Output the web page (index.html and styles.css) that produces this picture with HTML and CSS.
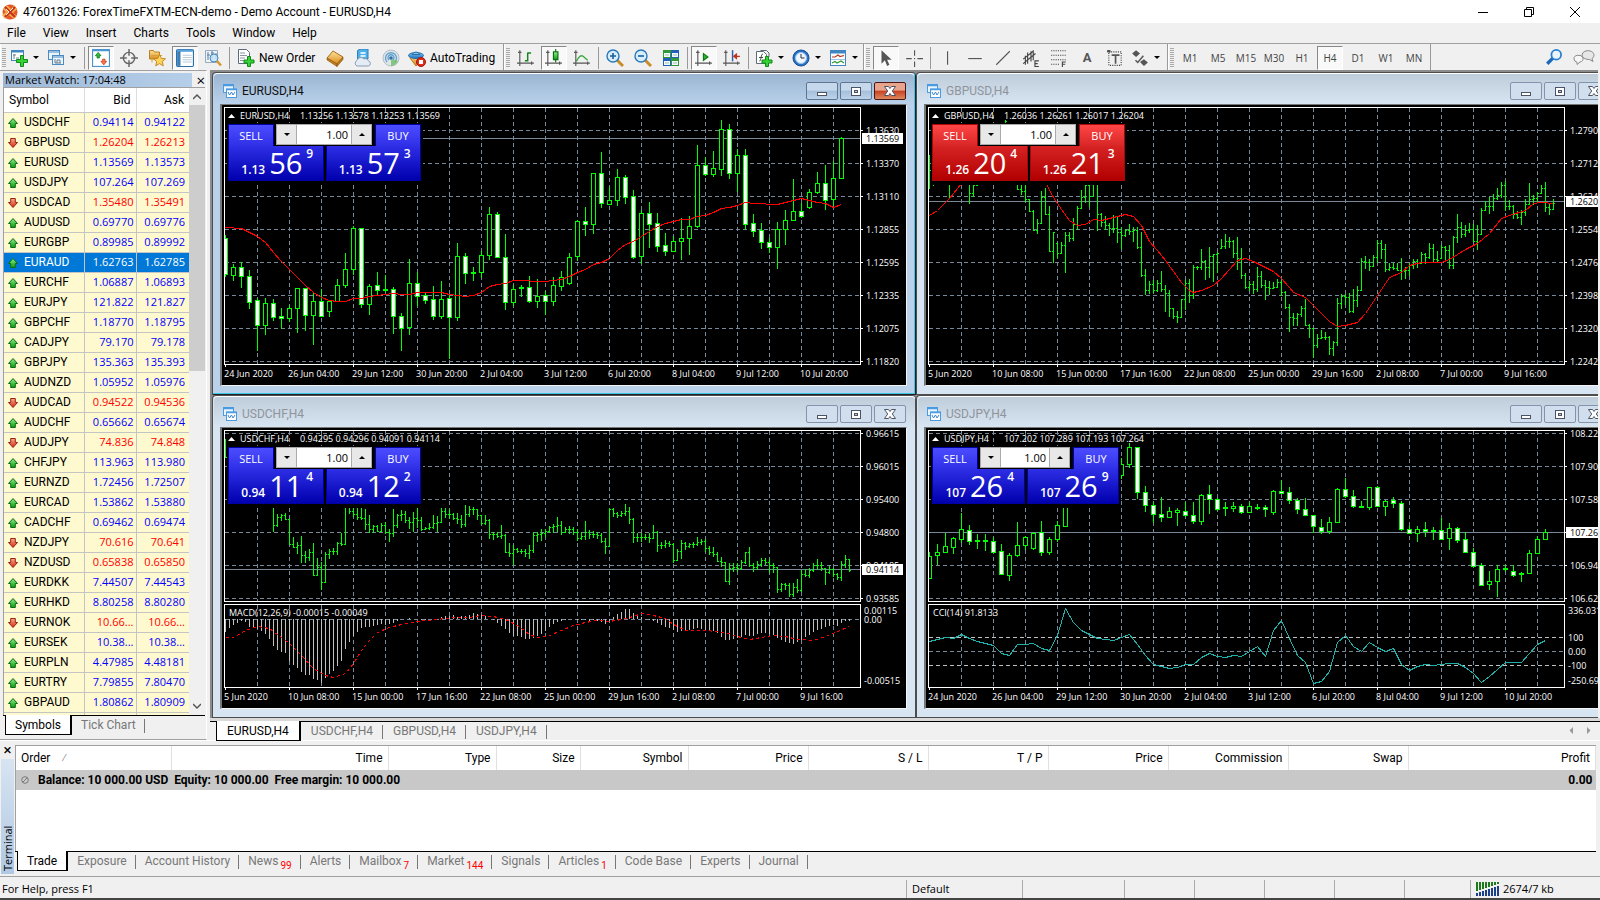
FILE: index.html
```html
<!DOCTYPE html>
<html lang="en">
<head>
<meta charset="utf-8">
<title>47601326: ForexTimeFXTM-ECN-demo - Demo Account - EURUSD,H4</title>
<link rel="stylesheet" href="styles.css">
</head>
<body>
<svg class="defs" aria-hidden="true">
  <defs>
    <linearGradient id="gGreen" x1="0" y1="0" x2="0" y2="1"><stop offset="0" stop-color="#8df08a"/><stop offset="1" stop-color="#0c9a12"/></linearGradient>
    <linearGradient id="gRed" x1="0" y1="0" x2="0" y2="1"><stop offset="0" stop-color="#ffab8f"/><stop offset="1" stop-color="#d02a10"/></linearGradient>
    <linearGradient id="gGold" x1="0" y1="0" x2="0" y2="1"><stop offset="0" stop-color="#ffe39a"/><stop offset="1" stop-color="#d98a1c"/></linearGradient>
    <linearGradient id="gBlue" x1="0" y1="0" x2="0" y2="1"><stop offset="0" stop-color="#7cc8f5"/><stop offset="1" stop-color="#1b6fc0"/></linearGradient>
    <symbol id="up" viewBox="0 0 12 12"><path d="M6 1.500 10.500 6.500H8.300V10.500H3.700V6.500H1.500z" fill="url(#gGreen)" stroke="#0b6e12"/></symbol>
    <symbol id="down" viewBox="0 0 12 12"><path d="M6 10.500 10.500 5.500H8.300V1.500H3.700V5.500H1.500z" fill="url(#gRed)" stroke="#98230f"/></symbol>
    <symbol id="logo" viewBox="0 0 16 16"><circle cx="8" cy="8" r="7.5" fill="#e4532b"/><path d="M1 5 5 1l4 4 3-4 3 4-4 4 4 3-3 3-5-4-4 4-3-4 4-3z" fill="#f5b04a"/><path d="M3 3l10 10M13 3 3 13" stroke="#c8321d" stroke-width="2.4"/><path d="M4 5l3 3-3 3M11 4 8 7" stroke="#fff3dd" fill="none"/></symbol>
    <symbol id="newchart" viewBox="0 0 18 18"><rect x="1.5" y="1.5" width="12" height="10" fill="#fff" stroke="#3f86c2"/><path d="M1 2.5h13" stroke="#3f86c2" stroke-width="2"/><path d="M4 5v5M3 6h3M6 9h3" stroke="#6e7f90" fill="none"/><path d="M10.5 6.5h3v4h4v3h-4v4h-3v-4h-4v-3h4z" fill="#35d335" stroke="#118a17"/></symbol>
    <symbol id="profiles" viewBox="0 0 18 18"><g fill="#eaf4fd" stroke="#4b8bc4"><rect x="1.5" y="1.5" width="11" height="9"/><path d="M1.5 3h11"/><rect x="5.5" y="6.5" width="11" height="9"/><path d="M5.5 8h11"/></g><path d="M8 10v4h6M10 14v-3h3v3" stroke="#6a7c90" fill="none"/></symbol>
    <symbol id="watch" viewBox="0 0 16 16"><rect x=".5" y=".5" width="15" height="15" fill="#fff" stroke="#4a94d0"/><path d="M0 1h16" stroke="#4a94d0" stroke-width="2"/><path d="M5.5 3 8 6H6.5v2h-2V6H3z" fill="#2fbb39" stroke="#0d7d16" stroke-width=".7"/><path d="M10.5 14 8 11h1.5V9h2v2H13z" fill="#ff7b55" stroke="#c12f11" stroke-width=".7"/></symbol>
    <symbol id="target" viewBox="0 0 16 16"><circle cx="8" cy="8" r="5" fill="none" stroke="#666" stroke-width="1.3"/><path d="M8 0v6M8 10v6M0 8h6M10 8h6" stroke="#666" stroke-width="1.3"/></symbol>
    <symbol id="navigator" viewBox="0 0 18 18"><path d="M1.5 1.5h4l1 1.5h5v7h-10z" fill="url(#gGold)" stroke="#b9801f"/><path d="M4 13.5V6.5h10" stroke="#d6a13c" fill="none"/><path d="M11.5 5.5l1.8 3.9 4.2.4-3.2 2.8 1 4.2-3.8-2.2-3.8 2.2 1-4.2-3.2-2.8 4.2-.4z" fill="#ffd45a" stroke="#c27f12" stroke-width=".9"/></symbol>
    <symbol id="datawin" viewBox="0 0 16 16"><rect x=".5" y=".5" width="15" height="15" rx="1" fill="#fff" stroke="#2d6fa8"/><path d="M1 1.5h14" stroke="#5aa2dc" stroke-width="2"/><rect x="1" y="2" width="3" height="13" fill="#3f7fb8"/><path d="M6 5.5h8M6 7.5h8M6 9.5h8M6 11.5h8" stroke="#b9cbdc"/></symbol>
    <symbol id="tester" viewBox="0 0 18 18"><path d="M1.5 1.5h12v12h-12z" fill="#eef4fa" stroke="#93a9bd"/><path d="M4 3v8M8 2v8M12 4v6M3 6h3M7 4h3" stroke="#5a7fa2"/><circle cx="10" cy="9" r="4" fill="#c5e3f8" fill-opacity=".8" stroke="#4587b8"/><path d="M13 12l4 4.5" stroke="#d8972c" stroke-width="2.4"/></symbol>
    <symbol id="neworder" viewBox="0 0 18 18"><path d="M1.5.5h8l3 3v11h-11z" fill="#fff" stroke="#5c6b78"/><path d="M3 4h5M3 6.5h7M3 9h5M3 11.5h4" stroke="#8a97a3"/><path d="M10.5 7.5h3v3.5h3.5v3h-3.5v3.5h-3V14H7v-3h3.5z" fill="#35d335" stroke="#118a17"/></symbol>
    <symbol id="book" viewBox="0 0 18 18"><path d="M1 9 7 2l10 6-6 7z" fill="url(#gGold)" stroke="#a8701a"/><path d="M1 9v2l10 6.5V15zM11 17.5l6-7V8l-6 7z" fill="#c67b19" stroke="#8c5710" stroke-width=".6"/></symbol>
    <symbol id="cloud" viewBox="0 0 18 18"><path d="M3.5 1.5 6 0h8v10H3.5z" fill="#4fb0ec" stroke="#2f7fb8"/><path d="M6.5 3h5v2h-5zM6.5 6h5v2h-5z" fill="#d8efff"/><path d="M3 17a3 3 0 0 1 0-5.5 4 4 0 0 1 7-1.5 3.2 3.2 0 0 1 4.5 2 2.6 2.6 0 0 1 0 5z" fill="#e4ecf5" stroke="#8a9db5"/></symbol>
    <symbol id="signal" viewBox="0 0 18 18"><circle cx="9" cy="9" r="8" fill="#dfe5ea" stroke="#b5bfc7"/><path d="M5 13a5.5 5.5 0 1 1 8 0M7 11a3 3 0 1 1 4 0" fill="none" stroke="#5f9fce" stroke-width="1.3"/><circle cx="9" cy="9" r="1.8" fill="#2d6fae"/><path d="M9 10v7a8 8 0 0 0 7-5z" fill="#6cc063" fill-opacity=".8"/></symbol>
    <symbol id="auto" viewBox="0 0 18 18"><path d="M2 9 11 4l4 6-7 7z" fill="url(#gGold)" stroke="#b57a1b"/><ellipse cx="8" cy="6.5" rx="7.5" ry="3" fill="url(#gBlue)" stroke="#2b6ea8"/><path d="M4 5.5a4.5 4.5 0 0 1 8 0z" fill="#7fc4ee" stroke="#2b6ea8"/><circle cx="13" cy="13" r="4.5" fill="#e02c1b" stroke="#9e170c"/><rect x="11" y="11" width="4" height="4" fill="#fff"/></symbol>
    <symbol id="bars" viewBox="0 0 16 16"><path d="M2.5 1v14M0 12.5h15M1 3h3M13 11v3" stroke="#555" fill="none"/><path d="M9.5 3v8M9.5 3.5h3M7 10.5h2.5" stroke="#15861b" stroke-width="1.3" fill="none"/></symbol>
    <symbol id="candle" viewBox="0 0 16 16"><path d="M2.5 1v14M0 12.5h15M1 3h3M13 11v3" stroke="#555" fill="none"/><path d="M9.5 0v12" stroke="#0a6b10"/><rect x="7.5" y="2.5" width="4" height="7" fill="url(#gGreen)" stroke="#0a6b10"/></symbol>
    <symbol id="linechart" viewBox="0 0 16 16"><path d="M2.5 1v14M0 12.5h15M1 3h3M13 11v3" stroke="#555" fill="none"/><path d="M3 11c2-4 4-6 6-4.5L13 10" stroke="#3aa83f" stroke-width="1.2" fill="none"/></symbol>
    <symbol id="zoomin" viewBox="0 0 18 18"><path d="M11 11l6 6" stroke="#c98c26" stroke-width="3"/><circle cx="7" cy="7" r="6" fill="#d6edfb" stroke="#2b78b8" stroke-width="1.4"/><path d="M4 7h6M7 4v6" stroke="#1b5f9c" stroke-width="1.6"/></symbol>
    <symbol id="zoomout" viewBox="0 0 18 18"><path d="M11 11l6 6" stroke="#c98c26" stroke-width="3"/><circle cx="7" cy="7" r="6" fill="#d6edfb" stroke="#2b78b8" stroke-width="1.4"/><path d="M4 7h6" stroke="#1b5f9c" stroke-width="1.6"/></symbol>
    <symbol id="tile" viewBox="0 0 18 18"><rect x="1" y="1" width="8" height="8" fill="#2f9a35"/><rect x="9" y="1" width="8" height="8" fill="#2260b8"/><rect x="1" y="9" width="8" height="8" fill="#2260b8"/><rect x="9" y="9" width="8" height="8" fill="#2f9a35"/><path d="M2 4h6v4H2zM10 4h6v4h-6zM2 12h6v4H2zM10 12h6v4h-6z" fill="#f2f8ff"/><path d="M3 6h4M11 6h4M3 14h4M11 14h4" stroke="#9dbfa0"/></symbol>
    <symbol id="scroll" viewBox="0 0 16 16"><path d="M2.5 1v14M0 12.5h15M1 3h3M13 11v3" stroke="#555" fill="none"/><path d="M7.5 4v6l4-3z" fill="#2bb233" stroke="#0a7a12"/></symbol>
    <symbol id="shift" viewBox="0 0 16 16"><path d="M2.5 1v14M0 12.5h15M1 3h3M13 11v3" stroke="#555" fill="none"/><path d="M8.5 1v10" stroke="#2a62b0" stroke-width="1.3"/><path d="M15 6.5h-5M12 4.5l-2.5 2 2.5 2z" fill="#c0321a" stroke="#c0321a"/></symbol>
    <symbol id="indicators" viewBox="0 0 18 18"><path d="M1.5 2.5h7l3 3v9h-10z" fill="#fff" stroke="#5c6b78"/><path d="M5.5 1.5h6l2.5 2.5v4" fill="none" stroke="#5c6b78"/><path d="M4.5 12c2 0 1-7 3.5-7M4 8.5h4" stroke="#444" fill="none"/><path d="M10.5 7.5h3v3.5h3.5v3h-3.5v3.5h-3V14H7v-3h3.5z" fill="#35d335" stroke="#118a17"/></symbol>
    <symbol id="clock" viewBox="0 0 18 18"><circle cx="9" cy="9" r="8" fill="#2a72c8" stroke="#164f96"/><circle cx="9" cy="9" r="5.5" fill="#eef6ff" stroke="#9cc3ea"/><path d="M9 5v4h3.5" stroke="#333" fill="none"/></symbol>
    <symbol id="template" viewBox="0 0 18 18"><rect x="1.5" y="1.5" width="15" height="15" fill="#fff" stroke="#3f86c2"/><path d="M1 3h16" stroke="#3f86c2" stroke-width="3"/><path d="M3 8h3l3-2 2 1.5 4-1" stroke="#b23a22" fill="none" stroke-width="1.2"/><path d="M2 10.5h14" stroke="#9cc3ea"/><path d="M3 14l3-1.5 2 1.5 4-2 3 2" stroke="#2d9a35" fill="none" stroke-width="1.2"/></symbol>
    <symbol id="cursor" viewBox="0 0 16 16"><path d="M4 1v12l3-3 2 5 2-1-2-4.5h4z" fill="#555"/></symbol>
    <symbol id="cross" viewBox="0 0 16 16"><path d="M8.5 1v5M8.5 11v5M1 8.5h5M11 8.5h5" stroke="#555" fill="none"/><path d="M8 8h1v1H8z" fill="#555"/></symbol>
    <symbol id="vline" viewBox="0 0 16 16"><path d="M8.5 2v12" stroke="#555"/></symbol>
    <symbol id="hline" viewBox="0 0 16 16"><path d="M2 8.5h12" stroke="#555"/></symbol>
    <symbol id="trend" viewBox="0 0 16 16"><path d="M2 14 14 2" stroke="#555"/></symbol>
    <symbol id="channel" viewBox="0 0 16 16"><path d="M1 9 10 2M1 13l11-9M5 3v10M8 2v9M3 6v8M10 1v9" stroke="#444" fill="none"/><path d="M15 10.5h-3.5v5H15M11.5 13H14" stroke="#444" fill="none"/></symbol>
    <symbol id="fibo" viewBox="0 0 16 16"><path d="M1 1.5h14M1 5.5h14M1 9.5h14M1 13.5h8" stroke="#444" stroke-dasharray="1 1"/><path d="M14 11.5h-3v5M11 13.5h2.5" stroke="#444" fill="none"/></symbol>
    <symbol id="label" viewBox="0 0 16 16"><rect x="2.5" y="2.5" width="11" height="12" fill="none" stroke="#444" stroke-dasharray="1 1"/><path d="M1 1h3v2H1z" fill="#444"/><path d="M5 5.5h7M8.5 5v8" stroke="#555" stroke-width="1.5"/></symbol>
    <symbol id="shapes" viewBox="0 0 16 16"><path d="M1 4 4.5 1 8 4 4.5 7zM8 11.5 11.5 9l3.5 3-3.5 3z" fill="#555"/><path d="M4 10l2 2 5-6" stroke="#555" fill="none" stroke-width="1.3"/></symbol>
    <symbol id="search" viewBox="0 0 16 16"><path d="M7 9l-5 5" stroke="#1c68b8" stroke-width="3"/><circle cx="10" cy="6" r="4.3" fill="#eaf4fd" stroke="#2b80cf" stroke-width="1.6"/></symbol>
    <symbol id="chat" viewBox="0 0 24 16"><path d="M10 6a6 4.5 0 1 1 10 3.5l1 3-3.5-2A7 4.5 0 0 1 10 6z" fill="#e6e6e6" stroke="#888"/><path d="M2 10a4.5 3.5 0 1 1 6 3l-3 2.5v-2.3A4 3.5 0 0 1 2 10z" fill="#f7f7f7" stroke="#888"/></symbol>
    <symbol id="chartdoc" viewBox="0 0 14 14"><rect x=".5" y=".5" width="10" height="8" fill="#e9f5ff" stroke="#4a9be0"/><path d="M0 1.5h11" stroke="#4a9be0" stroke-width="1.5"/><rect x="3.5" y="5" width="10" height="8.5" fill="#fff" stroke="#4a9be0"/><path d="M3 5.5h11" stroke="#4a9be0" stroke-width="1.5"/><path d="M5 8l1.5 3 2-3 1.5 3 2-3" stroke="#3b86cc" fill="none"/></symbol>
    <symbol id="wmin" viewBox="0 0 14 12"><rect x="2.5" y="7.5" width="9" height="3" fill="#fff" stroke="#4c5365"/></symbol>
    <symbol id="wmax" viewBox="0 0 14 12"><rect x="2.5" y="2.5" width="9" height="8" fill="#fff" stroke="#4c5365"/><rect x="5.5" y="5.5" width="3" height="2" fill="#b9c9dc" stroke="#4c5365"/></symbol>
    <symbol id="wclose" viewBox="0 0 14 12"><path d="M1.5 1.500h4L7 3.500l1.500-2h4L9.300 6l3.200 4.500h-4L7 8.500l-1.500 2h-4L4.700 6z" fill="#fff" stroke="#4c5365"/></symbol>
  </defs>
</svg>

<header class="titlebar">
  <svg class="i16"><use href="#logo"/></svg>
  <h1>47601326: ForexTimeFXTM-ECN-demo - Demo Account - EURUSD,H4</h1>
  <button aria-label="Minimize"><svg viewBox="0 0 12 12"><path d="M1 6.5h10" stroke="#000"/></svg></button>
  <button aria-label="Restore"><svg viewBox="0 0 12 12"><path d="M1.5 3.5h7v7h-7zM3.5 3V1.5h7v7H9" stroke="#000" fill="none"/></svg></button>
  <button aria-label="Close"><svg viewBox="0 0 12 12"><path d="M1 1l10 10M11 1 1 11" stroke="#000"/></svg></button>
</header>
<nav class="menu"><button>File</button><button>View</button><button>Insert</button><button>Charts</button><button>Tools</button><button>Window</button><button>Help</button></nav>

<div class="toolbar">
  <div class="group">
    <i class="grip"></i>
    <button class="t drop" aria-label="New chart"><svg><use href="#newchart"/></svg></button>
    <button class="t drop" aria-label="Profiles"><svg><use href="#profiles"/></svg></button>
    <i class="sep"></i>
    <button class="t on" aria-label="Market watch"><svg><use href="#watch"/></svg></button>
    <button class="t" aria-label="Data window"><svg><use href="#target"/></svg></button>
    <button class="t" aria-label="Navigator"><svg><use href="#navigator"/></svg></button>
    <button class="t on" aria-label="Terminal"><svg><use href="#datawin"/></svg></button>
    <button class="t" aria-label="Strategy tester"><svg><use href="#tester"/></svg></button>
    <i class="sep wide"></i>
    <button class="t text order"><svg><use href="#neworder"/></svg>New Order</button>
    <button class="t" aria-label="MetaEditor"><svg><use href="#book"/></svg></button>
    <button class="t" aria-label="Hosting"><svg><use href="#cloud"/></svg></button>
    <button class="t" aria-label="Signals"><svg><use href="#signal"/></svg></button>
    <button class="t text autotrade"><svg><use href="#auto"/></svg>AutoTrading</button>
  </div>
  <div class="group">
    <i class="grip"></i>
    <button class="t" aria-label="Bar chart"><svg><use href="#bars"/></svg></button>
    <button class="t on" aria-label="Candlesticks"><svg><use href="#candle"/></svg></button>
    <button class="t" aria-label="Line chart"><svg><use href="#linechart"/></svg></button>
    <i class="sep"></i>
    <button class="t" aria-label="Zoom in"><svg><use href="#zoomin"/></svg></button>
    <button class="t" aria-label="Zoom out"><svg><use href="#zoomout"/></svg></button>
    <button class="t" aria-label="Tile windows"><svg><use href="#tile"/></svg></button>
    <i class="sep"></i>
    <button class="t on" aria-label="Auto scroll"><svg><use href="#scroll"/></svg></button>
    <button class="t" aria-label="Chart shift"><svg><use href="#shift"/></svg></button>
    <i class="sep wide"></i>
    <button class="t drop" aria-label="Indicators"><svg><use href="#indicators"/></svg></button>
    <button class="t drop" aria-label="Periods"><svg><use href="#clock"/></svg></button>
    <button class="t drop" aria-label="Templates"><svg><use href="#template"/></svg></button>
  </div>
  <div class="group studies">
    <i class="grip"></i>
    <button class="t on" aria-label="Cursor"><svg><use href="#cursor"/></svg></button>
    <button class="t" aria-label="Crosshair"><svg><use href="#cross"/></svg></button>
    <i class="sep"></i>
    <button class="t" aria-label="Vertical line"><svg><use href="#vline"/></svg></button>
    <button class="t" aria-label="Horizontal line"><svg><use href="#hline"/></svg></button>
    <button class="t" aria-label="Trendline"><svg><use href="#trend"/></svg></button>
    <button class="t" aria-label="Equidistant channel"><svg><use href="#channel"/></svg></button>
    <button class="t" aria-label="Fibonacci"><svg><use href="#fibo"/></svg></button>
    <button class="t letter">A</button>
    <button class="t" aria-label="Text label"><svg><use href="#label"/></svg></button>
    <button class="t drop" aria-label="Arrows"><svg><use href="#shapes"/></svg></button>
  </div>
  <div class="group periods">
    <i class="grip"></i>
    <button class="t">M1</button><button class="t">M5</button><button class="t">M15</button><button class="t">M30</button><button class="t">H1</button><button class="t on">H4</button><button class="t">D1</button><button class="t">W1</button><button class="t">MN</button>
  </div>
  <div class="right">
    <button class="t" aria-label="Search"><svg><use href="#search"/></svg></button>
    <button class="t chat" aria-label="Chat"><svg><use href="#chat"/></svg></button>
  </div>
</div>

<main class="work">
  <aside class="watch">
    <div class="caption"><h2>Market Watch: 17:04:48</h2><button aria-label="Close">×</button></div>
    <div class="list">
      <table class="quotes">
        <colgroup><col class="c1"><col class="c2"><col></colgroup>
        <thead><tr><th>Symbol</th><th>Bid</th><th>Ask</th></tr></thead>
        <tbody id="quotes"></tbody>
      </table>
      <div class="scroll">
        <svg viewBox="0 0 8 8"><path d="M0 6l4-4 4 4" fill="none" stroke="#555" stroke-width="1.5"/></svg>
        <i></i>
        <svg viewBox="0 0 8 8"><path d="M0 2l4 4 4-4" fill="none" stroke="#555" stroke-width="1.5"/></svg>
      </div>
    </div>
    <div class="tabs"><button class="sel">Symbols</button><button>Tick Chart</button></div>
  </aside>
  <section class="desk">
    <div class="mdi" id="mdi"></div>
    <div class="tabs docs"><button class="sel">EURUSD,H4</button><button>USDCHF,H4</button><button>GBPUSD,H4</button><button>USDJPY,H4</button>
      <svg class="arrows" viewBox="0 0 24 8"><path d="M4 0v8L0 4zM20 0v8l4-4z" fill="#999"/></svg></div>
  </section>
</main>

<section class="terminal">
  <div class="spine"><button aria-label="Close">×</button><h2>Terminal</h2></div>
  <div class="pane">
    <div class="sheet">
      <table class="orders">
        <colgroup><col class="w156"><col class="w217"><col class="w108"><col class="w84"><col class="w108"><col class="w120"><col class="w120"><col class="w120"><col class="w120"><col class="w120"><col class="w120"><col></colgroup>
        <thead><tr><th>Order <span>⁄</span></th><th>Time</th><th>Type</th><th>Size</th><th>Symbol</th><th>Price</th><th>S / L</th><th>T / P</th><th>Price</th><th>Commission</th><th>Swap</th><th>Profit</th></tr></thead>
        <tbody><tr><td colspan="11"><svg viewBox="0 0 8 8"><circle cx="4" cy="4" r="3.3" fill="#ccc" stroke="#777"/><path d="M2 6l4-4" stroke="#777"/></svg>Balance: 10 000.00 USD&nbsp; Equity: 10 000.00&nbsp; Free margin: 10 000.00</td><td>0.00</td></tr></tbody>
      </table>
    </div>
    <div class="tabs"><button class="sel">Trade</button><button>Exposure</button><button>Account History</button><button>News<sub>99</sub></button><button>Alerts</button><button>Mailbox<sub>7</sub></button><button>Market<sub>144</sub></button><button>Signals</button><button>Articles<sub>1</sub></button><button>Code Base</button><button>Experts</button><button>Journal</button></div>
  </div>
</section>

<footer class="status">
  <span class="grow">For Help, press F1</span><span class="s116">Default</span><span class="s102"></span><span class="s70"></span><span class="s70"></span><span class="s70"></span><span class="s70"></span><span class="s66"></span>
  <span class="net"><svg viewBox="0 0 24 14"><path d="M1 0v9M4 0v8M7 0v7M10 0v6M13 0v5M16 0v4M19 0v3M22 0v2" stroke="#1d7a1d" stroke-width="2"/><path d="M1 14v-3M4 14v-4M7 14V9M10 14V8M13 14V7M16 14V6M19 14V5M22 14V4" stroke="#1d3f8a" stroke-width="2"/></svg>2674/7 kb</span>
</footer>
<script src="app.js"></script>
</body>
</html>
```

FILE: styles.css
```css
* { box-sizing: border-box; }
body { margin: 0; height: 100vh; min-height: 700px; display: flex; flex-direction: column; overflow: hidden; background: #f0f0f0; color: #000; font: 12px/16px Roboto, "Open Sans", sans-serif; }
button, input { font: inherit; color: inherit; margin: 0; padding: 0; border: 0; background: none; border-radius: 0; }
h1, h2 { margin: 0; font: inherit; }
table { border-collapse: collapse; table-layout: fixed; }
.defs { position: absolute; width: 0; height: 0; }
.i16 { width: 16px; height: 16px; }

.titlebar { display: flex; align-items: center; height: 23px; flex: none; background: #fff; padding-left: 2px; }
.titlebar h1 { flex: 1; padding-left: 5px; }
.titlebar button { width: 46px; height: 22px; display: grid; place-items: center; }
.titlebar button:last-child { margin-right: 2px; }
.titlebar button svg { width: 12px; height: 12px; }
.menu { display: flex; gap: 17px; height: 20px; flex: none; padding-left: 7px; }

.toolbar { display: flex; height: 27px; flex: none; border-top: 1px solid #a0a0a0; }
.group { display: flex; align-items: center; border-right: 1px solid #999; box-shadow: inset 1px 0 #fff; padding: 1px 2px 0 2px; }
.grip { width: 4px; height: 20px; margin-right: 2px; background: repeating-linear-gradient(#aaa 0 1px, #f0f0f0 1px 2px); }
.sep { width: 1px; height: 22px; margin: 0 2px; background: #999; }
.sep.wide { margin-right: 4px; }
.t { width: 28px; height: 24px; flex: none; display: flex; align-items: center; justify-content: center; color: #444; }
.t svg { width: 18px; height: 18px; }
.t.on { width: 26px; margin: 0 1px; background: #f9f9f9; border: 1px solid; border-color: #888 #fff #fff #888; }
.t.drop { width: 37px; justify-content: flex-start; padding-left: 2px; }
.t.drop:last-child { width: 34px; }
.studies .t.drop:last-child { width: 36px; }
.t.drop::after { content: ""; border: 3px solid transparent; border-top-color: #000; border-bottom: 0; margin-left: 5px; }
.t.text { gap: 4px; color: #000; padding-left: 3px; justify-content: flex-start; }
.t.order { width: 87px; }
.t.autotrade { width: 96px; }
.t.letter { font: bold 13px/16px Roboto, sans-serif; color: #555; }
.periods .t { font: 10px/14px "Open Sans", sans-serif; }
.right { margin-left: auto; display: flex; align-items: center; }
.t.chat { width: 32px; }
.t.chat svg { width: 24px; height: 18px; }

.work { flex: 1; min-height: 0; display: flex; }
.watch { width: 207px; flex: none; display: flex; flex-direction: column; padding: 2px 1px 4px 3px; border-top: 1px solid #a0a0a0; border-right: 1px solid #fff; border-bottom: 1px solid #a0a0a0; }
.caption { display: flex; height: 14px; flex: none; font: 11px/13px "Open Sans", sans-serif; }
.caption h2 { width: 190px; padding-left: 2px; background: linear-gradient(90deg, #9db8d6, #b5cfea); }
.caption button { flex: 1; font-size: 15px; line-height: 12px; padding-left: 4px; }
.list { flex: 1; min-height: 0; display: flex; overflow: hidden; border-top: 1px solid #a0a0a0; border-left: 1px solid #a0a0a0; background: #fff; }
.quotes { width: 185px; height: 1px; flex: none; }
.quotes .c1 { width: 80px; }
.quotes .c2 { width: 52px; }
.quotes th { height: 24px; padding: 0 5px; font-weight: 400; text-align: right; border-right: 1px solid #ddd; border-bottom: 1px solid #c8c8c8; background: #fff; }
.quotes th:first-child { text-align: left; }
.quotes th:last-child { border-right: 0; }
.quotes td { height: 20px; padding: 0 4px 0 0; font: 11px/16px "Open Sans", sans-serif; text-align: right; background: #fff9cf; border-bottom: 1px solid #c4c4c4; border-right: 1px solid #c4c4c4; color: #00f; white-space: nowrap; }
.quotes td:first-child { text-align: left; padding-left: 3px; color: #000; font: 12px/16px Roboto, sans-serif; }
.quotes td:nth-child(2) { padding-right: 2px; }
.quotes td:last-child { border-right: 0; }
.quotes td svg { width: 12px; height: 12px; margin-right: 5px; vertical-align: -3px; }
.quotes .dn td + td { color: #f00; }
.quotes .sel td, .quotes .sel td:first-child { background: #0078d7; color: #fff; }
.scroll { flex: 1; display: flex; flex-direction: column; align-items: center; justify-content: space-between; background: #f0f0f0; padding: 4px 0; }
.scroll svg { width: 8px; height: 10px; }
.scroll i { width: 16px; height: 43%; margin: 3px 0 auto; background: #cdcdcd; }

.tabs { display: flex; flex: none; height: 20px; border-top: 1px solid #000; color: #777; }
.tabs button { position: relative; padding: 0 9px; height: 19px; line-height: 17px; white-space: nowrap; }
.tabs button:not(.sel)::after { content: ""; position: absolute; right: 0; top: 3px; height: 14px; width: 1px; background: #777; }
.tabs .sel { background: #fff; color: #000; border: 1px solid #000; border-top: 0; border-width: 0 2px 1px 1px; margin-left: 2px; margin-top: -1px; height: 20px; line-height: 18px; }
.tabs sub { color: #f00; font-size: 10px; line-height: 8px; vertical-align: -4px; margin-left: 2px; }
.docs { border-top: 1px solid #000; box-shadow: 0 -3px #d9d9d9; margin-top: 3px; height: 19px; }
.docs button { padding: 0 10px; }
.docs .sel { margin-left: 6px; }
.arrows { width: 22px; height: 7px; margin: 5px 9px 0 auto; }

.desk { flex: 1; min-width: 0; display: flex; flex-direction: column; margin-left: 3px; }
.mdi { flex: 1; min-height: 0; display: grid; grid-template: 1fr 1fr / repeat(2, calc(50% + 11px)); overflow: hidden; background: #8c8c8c; border: solid #8c8c8c; border-width: 2px 0 0 2px; margin-right: 2px; }
.win { display: flex; flex-direction: column; min-height: 0; min-width: 0; background: #d7e4f2; border: solid #4d4d4d; border-width: 1px 0 0 1px; border-radius: 4px 4px 0 0; padding: 0 8px 9px 7px; box-shadow: inset -1px -1px #4d4d4d; }
.bar { height: 31px; flex: none; display: flex; align-items: center; gap: 2px; margin: 0 -7px 0 -6px; padding: 3px 9px 0 9px; border-top: 1px solid #fff; background: linear-gradient(#bfcddb, #d7e4f2); color: #8f949a; border-radius: 4px 4px 0 0; }
.bar h2 { flex: 1; padding-left: 3px; }
.bar > svg { width: 14px; height: 14px; }
.bar button { width: 32px; height: 18px; display: grid; place-items: center; border: 1px solid #8392ad; border-radius: 2px; background: #d0deed; }
.bar button svg { width: 14px; height: 12px; }
.win.active { background: #b9d1ea; box-shadow: inset -1px -1px #222, inset -2px -2px #38c7e8; }
.active .bar { background: linear-gradient(#9bb5d2, #b9d1ea); color: #111; margin-right: -6px; padding-right: 8px; }
.active .bar button { background: linear-gradient(#c6d8ec 45%, #a5bfdb 50%, #bdd3ea); border-color: #5f7591; }
.active .bar button:last-child { background: linear-gradient(#e9a48e 45%, #c8401f 50%, #dd8a60); border-color: #4c1712; }
.client { position: relative; flex: 1; min-height: 0; background: #000; border: 2px solid; border-color: #777 #f4f4f4 #f4f4f4 #777; border-width: 1px 1px 1px 2px; margin-right: 1px; }
.plot { position: absolute; display: block; }
.plot text { font: 9px "Open Sans", "Noto Sans", sans-serif; fill: #fff; }
.plot .now { fill: #000; }

.trade { position: absolute; left: 5px; top: 18px; width: 196px; height: 62px; padding: 1px 2px 0 1px; background: #000; color: #fff; font-family: "Open Sans", sans-serif; --a: #4c4cff; --b: #2e2ee6; --c: #0000ae; --d: #0000a0; --line: #8c7bff; }
.trade.down { --a: #ff4646; --b: #d62424; --c: #b20000; --d: #a80808; --line: #7a1a00; }
.trade.narrow { width: 190px; }
.trade div { display: flex; }
.side { width: 46px; height: 23px; background: linear-gradient(var(--a), var(--b)); border: solid var(--d); border-width: 1px 1px 0; }
.side span { display: block; margin: 0 3px; border-bottom: 1px solid var(--line); line-height: 20px; font-size: 11px; }
.lot { flex: 1; height: 21px; margin: 0 3px 0 2px; background: #fff; border: 1px solid #aaa; }
.lot button { width: 19px; background: #e8e8e8; display: grid; place-items: center; }
.lot button::after { content: ""; border: 3px solid transparent; border-top-color: #000; border-bottom: 0; }
.lot button:last-child::after { border-top: 0; border-bottom: 3px solid #000; }
.lot input { flex: 1; min-width: 0; width: 0; text-align: right; padding-right: 3px; color: #000; border: solid #aaa; border-width: 0 1px; font-size: 11px; }
.pair { gap: 2px; margin-top: -1px; }
.quote { flex: 1; height: 35px; display: flex; align-items: baseline; justify-content: center; gap: 4px; padding-left: 3px; background: linear-gradient(var(--b), var(--c)); border: solid var(--d); border-width: 0 1px 1px; font-weight: 600; line-height: 34px; }
.quote b { font-size: 29px; font-weight: 400; }
.quote sup { align-self: flex-start; line-height: 16px; font-size: 12px; vertical-align: 0; }

.terminal { flex: none; display: flex; height: 136px; padding-top: 4px; border-top: 1px solid #fff; }
.spine { width: 15px; flex: none; display: flex; flex-direction: column; align-items: center; }
.spine button { font-size: 15px; line-height: 10px; height: 14px; padding-bottom: 4px; }
.spine h2 { flex: 1; width: 13px; margin-bottom: 2px; writing-mode: vertical-rl; transform: rotate(180deg); font: 11px/13px "Open Sans", sans-serif; background: linear-gradient(#b0c8e2, #d7e4f2); padding-top: 3px; }
.pane { flex: 1; min-width: 0; padding-right: 4px; }
.sheet { height: 106px; background: #fff; border-top: 1px solid #a0a0a0; border-left: 1px solid #a0a0a0; }
.orders { width: 100%; }
.w156 { width: 155px; } .w217 { width: 217px; } .w108 { width: 108px; } .w84 { width: 84px; } .w120 { width: 120px; }
.orders th { height: 24px; padding: 0 5px; font-weight: 400; text-align: right; border-right: 1px solid #e0e0e0; }
.orders th:first-child { text-align: left; }
.orders th span { color: #888; margin-left: 8px; }
.orders td { height: 20px; padding: 0 5px; background: #c8c8c8; font-weight: 700; text-align: left; }
.orders td:last-child { text-align: right; padding-right: 3px; }
.orders td svg { width: 8px; height: 8px; margin-right: 9px; }

.status { flex: none; display: flex; height: 24px; border-top: 1px solid #a0a0a0; border-bottom: 2px solid #444; padding-top: 3px; font: 11px/18px "Open Sans", sans-serif; }
.status span { border-left: 1px solid #aaa; padding-left: 5px; }
.status .grow { flex: 1; border: 0; padding-left: 2px; }
.s116 { width: 116px; } .s102 { width: 102px; } .s70 { width: 70px; } .s66 { width: 66px; }
.net { width: 130px; }
.net svg { width: 24px; height: 14px; margin-right: 3px; vertical-align: -3px; }
```

FILE: app.js
```js
// Market Watch rows: symbol, bid, ask, falling flag
const QUOTES = `USDCHF 0.94114 0.94122
GBPUSD 1.26204 1.26213 d
EURUSD 1.13569 1.13573
USDJPY 107.264 107.269
USDCAD 1.35480 1.35491 d
AUDUSD 0.69770 0.69776
EURGBP 0.89985 0.89992
EURAUD 1.62763 1.62785
EURCHF 1.06887 1.06893
EURJPY 121.822 121.827
GBPCHF 1.18770 1.18795
CADJPY 79.170 79.178
GBPJPY 135.363 135.393
AUDNZD 1.05952 1.05976
AUDCAD 0.94522 0.94536 d
AUDCHF 0.65662 0.65674
AUDJPY 74.836 74.848 d
CHFJPY 113.963 113.980
EURNZD 1.72456 1.72507
EURCAD 1.53862 1.53880
CADCHF 0.69462 0.69474
NZDJPY 70.616 70.641 d
NZDUSD 0.65838 0.65850 d
EURDKK 7.44507 7.44543
EURHKD 8.80258 8.80280
EURNOK 10.66... 10.66... d
EURSEK 10.38... 10.38...
EURPLN 4.47985 4.48181
EURTRY 7.79855 7.80470
GBPAUD 1.80862 1.80909`.split('\n').map(l => l.split(' '));

document.getElementById('quotes').innerHTML = QUOTES.map(([s, b, a, d]) =>
  `<tr class="${d ? 'dn' : ''}${s === 'EURAUD' ? ' sel' : ''}"><td><svg><use href="#${d ? 'down' : 'up'}"/></svg>${s}</td><td>${b}</td><td>${a}</td></tr>`
).join('') + '<tr><td></td><td></td><td></td></tr>';

const parse = s => s.trim().split(/\s+/).map(p => p.split(',').map(Number));

// Candles: high, low, body top, body bottom, rising flag. Bars: high, low, close.
// Levels are counted downwards in thirds of a pixel from each chart's base level.
const EUR = parse(`496,620,505,613,0 583,632,592,614,1 577,654,592,619,0 600,717,619,695,0 685,842,691,764,0 684,795,700,764,1 687,753,700,740,0 714,776,738,745,0 705,755,715,745,1 655,789,655,715,1
655,783,655,734,0 669,825,694,734,1 657,741,694,738,0 690,741,694,724,1 627,695,646,694,1 549,654,598,646,1 468,616,475,598,1 475,714,475,701,0 642,735,649,701,1 606,676,645,661,0
616,665,658,661,1 651,792,657,737,0 729,842,737,773,0 568,795,640,770,1 606,708,640,677,0 668,702,676,689,0 648,750,688,738,0 633,748,688,738,1 676,868,685,740,0 519,753,559,740,1
549,642,559,610,0 591,632,606,610,1 543,623,556,607,1 411,570,433,556,1 427,563,433,562,0 492,720,562,697,0 646,709,658,697,1 645,681,652,655,1 618,699,652,694,0 627,713,677,694,1
664,735,676,694,0 621,708,646,694,1 603,662,622,647,1 549,645,562,640,1 450,573,454,559,1 411,497,454,461,0 309,492,310,461,1 247,414,310,398,0 351,406,391,401,1 297,408,322,391,1
316,402,322,380,0 360,567,379,560,0 420,582,430,559,1 396,533,430,461,0 429,546,460,527,0 489,557,526,542,0 498,543,514,542,1 444,570,505,514,1 438,555,469,505,1 225,473,286,469,1
262,318,286,311,0 243,320,295,311,1 151,317,176,296,1 163,327,176,310,0 237,367,256,310,1 237,479,256,461,0 432,500,460,482,0 459,537,480,517,0 504,549,517,532,0 456,597,478,532,1
420,525,451,478,1 327,453,424,449,1 399,443,424,437,0 357,417,367,410,1 306,371,338,367,1 285,420,338,391,0 273,408,325,388,1 202,327,205,325,1`);
const EUR_MA = parse(`0,472 2,473 4,497 5,515 6,545 7,572 8,597 9,620 10,645 11,665 12,680 13,691 14,694 15,694 16,685 17,685 18,679 19,676 20,671 21,668 22,673 23,671 24,667 27,667 28,672 29,674 30,679 31,675 32,666 33,649 34,642 35,638 36,631 40,634 41,630 42,627 43,619 44,606 45,597 46,582 47,577 48,563 49,540 50,523 51,513 52,499 53,482 54,468 55,460 56,453 57,446 58,447 59,437 60,436 61,427 62,413 63,412 64,404 65,397 66,400 69,403 70,397 71,390 72,385 73,390 74,395 75,400 76,411 77,403`);

const GBP = parse(`256,356,300 320,347,330 300,330,310 290,330,300 290,330,310 300,387,340 290,330,300 280,330,290 270,330,300 280,335,320 310,401,370 300,382,345 290,348,300 250,325,280 240,320,270 230,320,260 230,320,260 230,320,260 220,300,250 150,158,154
230,320,260 250,330,310 310,360,358 300,375,362 330,396,388 388,427,422 420,482,480 447,492,458 363,459,381 354,433,433 408,545,543 485,580,487 518,565,548 516,553,526 485,608,495 486,515,505 445,513,463 408,480,415 360,415,381 338,400,345
335,412,378 330,381,340 330,482,431 430,472,457 438,480,466 458,497,475 436,490,474 440,518,487 471,536,495 476,500,480 463,494,484 471,516,480 470,536,530 486,622,616 598,674,660 633,672,642 630,670,660 629,666,640 602,666,656 645,726,670
660,742,714 714,747,738 724,758,742 687,745,688 630,719,640 628,699,675 585,686,590 587,600,590 537,600,572 570,630,592 530,624,558 552,636,553 545,609,548 507,535,528 491,538,513 500,535,512 510,565,548 502,600,563 533,628,614 610,657,651
633,662,643 632,672,658 591,667,619 603,655,645 629,690,650 633,676,653 636,658,650 627,655,635 630,678,666 664,718,710 702,786,742 728,768,745 728,768,733 708,740,714 687,767,765 763,804,775 775,864,824 792,833,803 780,808,800 785,809,800
798,856,835 813,858,816 684,828,700 673,716,678 672,706,681 670,728,722 657,728,690 648,711,660 563,663,572 557,597,575 567,603,587 554,591,560 510,580,520 510,567,537 521,606,597 578,604,590 580,599,595 580,601,599 563,629,603 590,628,600
580,618,585 566,597,572 567,594,578 545,580,553 548,581,560 520,568,533 522,577,568 542,577,570 525,564,530 527,572,540 526,598,586 498,597,502 432,519,470 455,503,493 466,500,481 460,490,478 462,515,512 464,540,493 415,496,419 393,424,408
382,432,408 372,423,383 355,391,375 335,383,345 333,423,408 389,421,409 404,446,433 424,446,440 421,465,425 387,438,403 338,405,388 375,404,385 365,398,370 345,373,355 335,427,411 400,436,418 387,420,400`);
const GBP_MA = parse(`0,436 2,420 5,385 7,355 8,340 14,260 25,270 29,335 31,380 33,417 35,450 37,466 39,463 41,447 43,450 45,443 47,437 49,433 51,438 53,465 55,512 57,540 59,570 61,604 63,636 65,660 66,667 68,660 71,645 73,625 75,597 77,571 79,565 81,573 84,590 86,604 88,623 90,651 91,665 94,682 97,718 100,753 102,769 104,765 107,755 109,730 112,675 115,622 118,605 120,585 123,577 128,575 130,568 132,552 134,536 137,520 140,490 143,445 145,436 149,420 151,400 153,396 156,400`);

const CHF = parse(`147,205,200 200,330,300 200,330,300 200,330,300 200,330,300 200,330,300 200,330,300 200,330,300 200,330,300 200,330,300 200,330,300 200,330,320 348,426,404 373,411,380 372,392,374 369,390,387 387,466,461 441,475,470 456,492,465 438,518,495
483,519,502 476,512,485 459,557,554 504,558,530 516,600,575 486,577,491 476,507,484 474,495,484 457,495,460 429,468,461 345,465,352 348,372,363 345,380,372 350,389,382 345,390,385 358,420,402 375,430,418 405,428,408 405,427,424 398,427,404
396,432,427 416,456,430 357,440,406 372,414,375 360,392,373 363,400,390 381,417,395 366,427,385 348,414,390 381,422,417 410,420,413 398,419,410 376,418,400 378,427,395 354,400,364 354,385,373 357,387,373 370,391,385 370,402,387 375,415,402
345,411,373 348,380,357 350,376,357 357,390,376 375,405,400 376,404,390 388,447,433 426,450,433 427,445,438 405,447,435 432,489,485 460,501,489 466,526,478 474,490,482 477,492,484 476,501,488 465,506,479 426,490,434 426,456,432 417,453,430
416,440,424 407,430,412 403,428,408 381,425,405 393,434,426 412,430,417 408,432,417 412,434,427 417,452,444 426,450,438 393,450,427 420,448,432 422,444,431 426,447,434 430,460,452 444,491,469 354,472,358 354,380,369 366,385,375 363,382,369
342,378,363 351,402,386 384,459,441 429,456,440 429,455,440 431,450,440 429,458,443 405,446,425 423,486,465 455,478,464 450,475,460 453,472,462 459,519,511 477,513,482 450,506,458 455,480,468 459,474,463 456,474,463 441,468,455 447,465,454
448,487,474 468,495,487 470,502,491 486,516,513 500,530,517 515,577,573 520,585,535 518,545,530 520,545,535 510,540,517 485,522,487 471,530,525 519,546,530 514,540,521 504,530,511 504,525,517 507,550,525 518,550,532 530,608,597 580,605,583
578,600,584 578,620,613 580,620,590 567,608,601 540,605,552 537,562,555 535,563,540 520,545,525 507,540,525 516,543,535 534,585,545 528,552,537 534,560,551 549,571,560 513,573,523 495,535,508 507,545,540`);
const MACD = `725 714 705 699 694 697 711 713 717 722 732 747 768 781 785 790 812 824 833 845 854 854 866 870 879 865 853 842 827 812 778 755 738 726 714 710 710 709 706 703 704 703 699 692 687 686 684 686 687 689 689 688 687 686 681 677 678 676 680 679 679 674 669 672 674 679 686 690 700 708 716 729 738 739 741 746 746 743 739 732 722 711 702 695 693 689 687 687 689 691 690 692 690 693 697 702 692 681 672 666 657 657 669 676 681 688 690 692 698 705 710 714 720 725 724 722 720 718 714 716 719 720 724 730 742 749 750 748 745 740 735 738 737 733 729 728 731 735 745 750 756 759 761 757 750 742 734 726 720 716 712 708 705 707 700 694 693`.split(' ').map(Number);
const MACD_SIG = parse(`0,742 2,742 5,720 8,709 11,713 13,731 16,760 19,795 22,833 25,855 27,861 30,849 32,820 34,780 36,750 38,726 41,712 44,703 47,695 50,690 53,688 57,682 61,680 64,674 67,677 70,686 73,706 76,731 78,740 81,735 84,721 87,705 90,696 93,691 96,693 99,688 102,677 104,670 107,674 110,685 112,703 115,719 120,721 125,725 128,739 131,746 134,741 137,736 140,737 143,748 147,750 150,738 153,722 156,708`);

const JPY = parse(`487,567,497,563,1 462,525,487,495,1 430,490,469,487,1 440,492,444,470,1 370,458,418,446,1 406,466,419,452,0 432,477,451,454,1 432,484,450,454,1 441,489,454,485,0 462,554,484,552,0
490,572,496,554,1 396,502,466,496,1 438,480,442,464,1 427,481,428,475,1 393,497,427,485,0 441,495,448,485,1 392,455,406,448,1 300,410,300,407,1 200,330,220,300,1 200,330,220,300,1
200,330,220,300,1 200,330,220,300,1 200,330,220,300,1 200,353,220,300,1 203,268,223,256,1 158,235,172,223,1 172,328,172,307,0 288,365,307,346,0 337,398,346,373,0 321,397,373,380,0
351,383,364,380,1 353,407,361,367,1 337,381,364,376,0 337,402,376,394,0 313,405,314,394,1 285,372,313,328,0 325,362,328,356,0 337,378,351,354,1 335,366,349,353,1 343,371,348,367,0
337,368,349,367,1 343,361,351,354,1 346,380,350,358,0 300,375,304,367,1 270,311,303,310,0 291,342,307,331,0 325,371,331,358,0 324,377,358,374,0 374,430,374,409,0 388,431,412,422,0
382,433,397,422,1 295,398,298,397,1 264,325,297,319,0 300,355,319,349,0 334,353,349,352,1 290,361,292,352,1 289,352,292,349,0 331,377,332,349,1 321,355,331,340,0 333,422,340,418,0
408,433,418,430,0 408,455,418,430,1 396,440,418,423,0 412,449,421,424,1 384,449,421,446,0 398,480,415,445,1 412,458,415,449,0 427,490,448,487,0 475,532,487,527,0 520,587,526,584,0
543,599,574,583,1 526,620,538,574,1 525,545,535,538,1 525,560,544,556,0 545,575,550,553,1 480,553,490,550,1 438,493,448,490,1 418,449,427,446,1`);
const CCI = `753 748 742 745 733 745 753 759 766 790 796 763 763 758 775 781 735 654 697 720 731 745 748 751 742 733 762 795 821 829 835 831 821 821 800 790 799 802 796 799 782 769 799 720 689 745 795 815 880 874 842 757 735 769 782 755 770 783 775 823 840 829 823 826 823 820 820 831 849 877 858 838 817 817 817 790 763 750`.split(' ').map((v, i) => [i, +v]);

const T_A = ['24 Jun 2020', '26 Jun 04:00', '29 Jun 12:00', '30 Jun 20:00', '2 Jul 04:00', '3 Jul 12:00', '6 Jul 20:00', '8 Jul 04:00', '9 Jul 12:00', '10 Jul 20:00'];
const T_B = ['5 Jun 2020', '10 Jun 08:00', '15 Jun 00:00', '17 Jun 16:00', '22 Jun 08:00', '25 Jun 00:00', '29 Jun 16:00', '2 Jul 08:00', '7 Jul 00:00', '9 Jul 16:00'];

const WINDOWS = [
  { name: 'EURUSD,H4', active: true, ohlc: '1.13256 1.13578 1.13253 1.13569', base: 35, grid: 25, times: T_A, candles: EUR, ma: EUR_MA,
    axis: ['1.13630', '1.13370', '1.13110', '1.12855', '1.12595', '1.12335', '1.12075', '1.11820'], last: ['1.13569', 33],
    sell: ['1.13', '56', '9'], buy: ['1.13', '57', '3'] },
  { name: 'GBPUSD,H4', ohlc: '1.26036 1.26261 1.26017 1.26204', base: 35, grid: 25, times: T_B, bars: GBP, ma: GBP_MA, panel: 'down',
    axis: ['1.27900', '1.27120', '1.26340', '1.25540', '1.24760', '1.23980', '1.23200', '1.22420'], last: ['1.26204', 96],
    sell: ['1.26', '20', '4'], buy: ['1.26', '21', '3'] },
  { name: 'USDCHF,H4', ohlc: '0.94295 0.94296 0.94091 0.94114', base: 38, grid: 5, times: T_B, bars: CHF, split: 173,
    axis: ['0.96615', '0.96015', '0.95400', '0.94800', '0.94185', '0.93585'], last: ['0.94114', 141],
    sell: ['0.94', '11', '4'], buy: ['0.94', '12', '2'],
    sub: { title: 'MACD(12,26,9) -0.00015 -0.00049', hist: MACD, signal: MACD_SIG, levels: [[191, '#778899']], labels: [['0.00115', 182], ['0.00', 191], ['-0.00515', 252]] } },
  { name: 'USDJPY,H4', ohlc: '107.202 107.289 107.193 107.264', base: 38, grid: 5, times: T_A, candles: JPY, split: 173, panel: 'narrow',
    axis: ['108.220', '107.900', '107.580', '', '106.940', '106.620'], last: ['107.264', 104],
    sell: ['107', '26', '4'], buy: ['107', '26', '9'],
    sub: { title: 'CCI(14) 91.8133', line: CCI, levels: [[209, '#c0c0c0'], [223, '#778899'], [237, '#c0c0c0']], labels: [['336.0313', 182], ['100', 209], ['0.00', 223], ['-100', 237], ['-250.6940', 252]] } }
];

function draw(c, W, H) {
  const R = W - 46, B = H - 21, P = c.split || B;
  const y = v => Math.round(v / 3) - c.base;
  const h = (yy, col, dash) => `<path d="M3 ${yy + .5}H${R}" stroke="${col}"${dash ? ' stroke-dasharray="4 3"' : ''}/>`;
  const poly = (pts, step, col, extra = '') => `<polyline points="${pts.map(([i, v]) => `${3 + i * step + .5},${y(v) + .5}`).join(' ')}" fill="none" stroke="${col}" ${extra}/>`;
  let s = '', t = '', clip = '';
  for (let x = 35; x < R; x += 32) {
    s += `<path d="M${x + .5} 3V${P}" stroke="#778899" stroke-dasharray="4 3"/>`;
    if (c.sub) s += `<path d="M${x + .5} ${P + 4}V${B}" stroke="#778899" stroke-dasharray="4 3"/>`;
  }
  c.axis.forEach((a, i) => {
    const yy = c.grid + i * 33;
    if (a) s += h(yy, '#778899', true);
    t += `<path d="M${R} ${yy + .5}h3" stroke="#fff"/><text x="${R + 6}" y="${yy + 4}">${a}</text>`;
  });
  s += h(c.last[1], '#778899');
  if (c.candles) {
    c.candles.forEach(([hi, lo, a, b, u], i) => {
      const x = 3 + i * 8, bh = Math.max(y(b) - y(a), 1);
      clip += `<path d="M${x + .5} ${y(hi)}V${y(lo)}" stroke="#0f0"/><rect x="${x - 1.5}" y="${y(a) + .5}" width="4" height="${bh}" fill="${u ? '#000' : '#fff'}" stroke="#0f0"/>`;
    });
  } else {
    let d = '', prev = c.bars[0][2];
    c.bars.forEach(([hi, lo, cl], i) => {
      const x = 3 + i * 4;
      d += `M${x + .5} ${y(hi)}V${y(lo)}M${x - 1} ${y(Math.min(Math.max(prev, hi), lo)) + .5}h2M${x} ${y(cl) + .5}h2`;
      prev = cl;
    });
    clip += `<path d="${d}" stroke="#0f0" fill="none"/>`;
  }
  if (c.ma) clip += poly(c.ma, c.candles ? 8 : 4, '#f00');
  s += `<svg x="2" y="2" width="${R - 2}" height="${P - 2}" viewBox="2 2 ${R - 2} ${P - 2}">${clip}</svg>`;
  s += `<rect x="2.5" y="2.5" width="${R - 2}" height="${P - 2}" fill="none" stroke="#fff"/>`;
  if (c.sub) {
    const u = c.sub;
    s += u.levels.map(l => h(l[0], l[1], true)).join('');
    if (u.hist) s += `<path d="${u.hist.map((v, i) => `M${3.5 + i * 4} 191V${y(v)}`).join('')}" stroke="#c0c0c0"/>` + poly(u.signal, 4, '#f00', 'stroke-dasharray="3 3"');
    if (u.line) s += poly(u.line, 8, '#20b2aa');
    s += `<rect x="2.5" y="${P + 3.5}" width="${R - 2}" height="${B - P - 3}" fill="none" stroke="#fff"/>`;
    t += u.labels.map(([l, yy]) => `<text x="${R + 4}" y="${yy + 4}">${l}</text>`).join('') + `<text x="7" y="${P + 15}">${u.title}</text>`;
  }
  c.times.forEach((l, i) => { t += `<path d="M${3.5 + i * 64} ${B}v3" stroke="#fff"/><text x="${2 + i * 64}" y="${B + 13}">${l}</text>`; });
  t += `<rect x="${R + 2}" y="${c.last[1] - 5}" width="41" height="11" fill="#fff"/><text class="now" x="${R + 6}" y="${c.last[1] + 4}">${c.last[0]}</text>`;
  t += `<path d="M6 13h7l-3.5 -4z" fill="#fff"/><text x="18" y="14">${c.name}</text><text x="78" y="14">${c.ohlc}</text>`;
  return `<g shape-rendering="crispEdges">${s}</g><g>${t}</g>`;
}

const quote = ([a, b, e]) => `<button class="quote">${a}<b>${b}</b><sup>${e}</sup></button>`;
const mdi = document.getElementById('mdi');
mdi.innerHTML = WINDOWS.map(c => `<article class="win${c.active ? ' active' : ''}">
  <div class="bar"><svg><use href="#chartdoc"/></svg><h2>${c.name}</h2><button aria-label="Minimize"><svg><use href="#wmin"/></svg></button><button aria-label="Maximize"><svg><use href="#wmax"/></svg></button><button aria-label="Close"><svg><use href="#wclose"/></svg></button></div>
  <div class="client"><svg class="plot"></svg>
    <div class="trade ${c.panel || ''}"><div><button class="side"><span>SELL</span></button><div class="lot"><button aria-label="Less"></button><input aria-label="Volume" value="1.00"><button aria-label="More"></button></div><button class="side"><span>BUY</span></button></div>
    <div class="pair">${quote(c.sell)}${quote(c.buy)}</div></div>
  </div></article>`).join('');

function render() {
  document.querySelectorAll('.client').forEach((el, i) => {
    const svg = el.querySelector('.plot'), w = el.clientWidth, h = el.clientHeight;
    svg.setAttribute('width', w);
    svg.setAttribute('height', h);
    svg.innerHTML = draw(WINDOWS[i], w, h);
  });
}
render();
addEventListener('resize', render);
```
